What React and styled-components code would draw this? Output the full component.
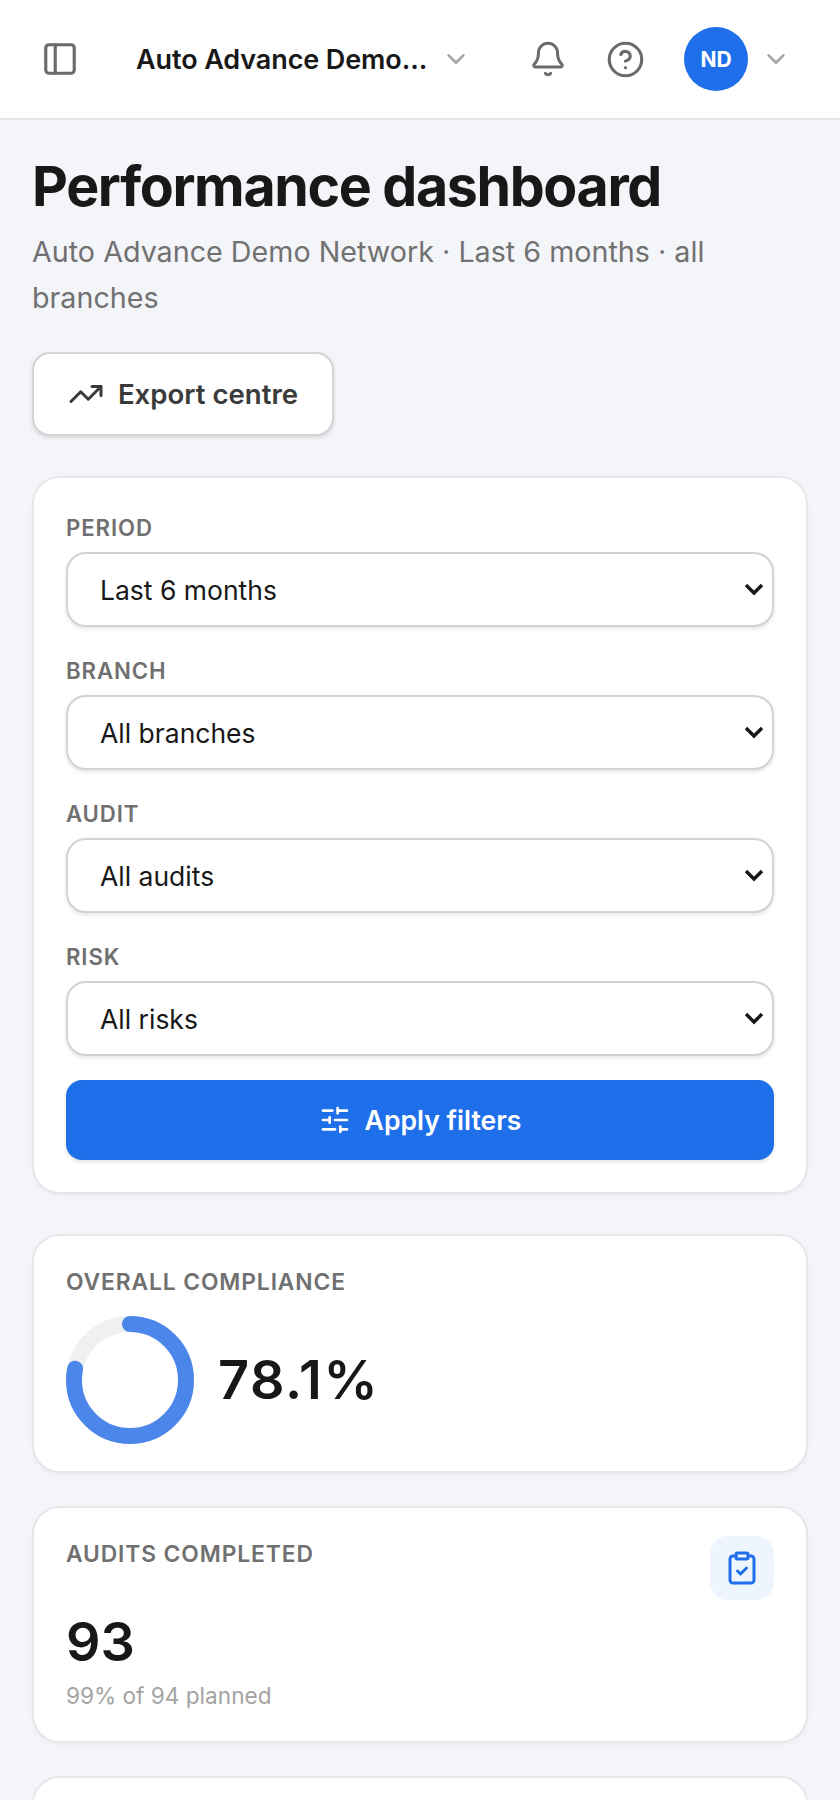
import React from "react";
import styled, { createGlobalStyle } from "styled-components";
import { PanelLeft, ChevronDown, Bell, CircleHelp, TrendingUp, SlidersHorizontal, ClipboardCheck } from "lucide-react";

const Global = createGlobalStyle`
  html, body { margin: 0; padding: 0; background: #f4f5f9; }
  body { font-family: Inter, "Liberation Sans", sans-serif; color: #181818; }
  html, body, #root { height: 1800px; overflow: hidden; }
  * { box-sizing: border-box; }
`;

const Header = styled.header`
  height: 120px;
  background: #fff;
  border-bottom: 2px solid #e4e5e8;
  display: flex;
  align-items: center;
  padding: 0 49px 0 41px;
  color: #6b6b6b;
`;
const Org = styled.div`
  display: flex;
  align-items: center;
  margin-left: 57px;
  color: #a8a8a8;
`;
const OrgName = styled.span`
  font-size: 27px;
  font-weight: 600;
  letter-spacing: -0.1px;
  color: #181818;
  width: 305px;
  white-space: nowrap;
`;
const HeaderIcons = styled.div`
  margin-left: auto;
  display: flex;
  align-items: center;
  gap: 39px;
`;
const User = styled.div`
  display: flex;
  align-items: center;
  gap: 13px;
  color: #a8a8a8;
`;
const Avatar = styled.div`
  width: 64px;
  height: 64px;
  border-radius: 50%;
  background: #206fea;
  color: #fff;
  font-size: 21px;
  font-weight: 700;
  display: flex;
  align-items: center;
  justify-content: center;
`;
const Main = styled.main`
  padding: 39px 32px 0;
`;
const Title = styled.h1`
  margin: 0;
  font-size: 55.5px;
  line-height: 54px;
  font-weight: 700;
  letter-spacing: -1.35px;
  color: #181818;
`;
const Sub = styled.p`
  margin: 16px 0 0;
  font-size: 28.7px;
  line-height: 46px;
  color: #717171;
`;
const ExportButton = styled.button`
  margin-top: 31px;
  height: 84px;
  width: 302px;
  display: flex;
  align-items: center;
  justify-content: center;
  gap: 14px;
  background: #fff;
  border: 2px solid #d4d4d6;
  border-radius: 18px;
  box-shadow: 0 2px 4px rgba(0, 0, 0, 0.12);
  font: 600 27.6px Inter, sans-serif;
  color: #3a3a3a;
`;
const Card = styled.section`
  background: #fff;
  border: 2px solid #e6e7ea;
  border-radius: 28px;
  box-shadow: 0 2px 4px rgba(0, 0, 0, 0.04);
  padding: 33px 32px;
  margin-top: ${(p) => p.$gap}px;
`;
const FilterCard = styled(Card)`
  height: 718px;
  padding-top: 36px;
`;
const FieldLabel = styled.label`
  display: block;
  padding-top: 1px;
  font-size: 22.2px;
  line-height: 26px;
  font-weight: 600;
  letter-spacing: 0.9px;
  text-transform: uppercase;
  color: #707070;
`;
const Field = styled.div`
  & + & {
    margin-top: 30px;
  }
`;
const SelectWrap = styled.div`
  position: relative;
  margin-top: 11px;
  color: #181818;
`;
const Select = styled.select`
  appearance: none;
  display: block;
  width: 100%;
  height: 75px;
  padding: 0 32px;
  background: #fff;
  border: 2px solid #d2d3d6;
  border-radius: 20px;
  box-shadow: 0 2px 4px rgba(0, 0, 0, 0.1);
  font: 400 26.5px Inter, sans-serif;
  color: #181818;
`;
const Arrow = styled.svg`
  position: absolute;
  right: 8px;
  top: 30px;
`;
const ApplyButton = styled.button`
  width: 100%;
  height: 80px;
  margin-top: 24px;
  display: flex;
  align-items: center;
  justify-content: center;
  gap: 14px;
  background: #206fea;
  border: 0;
  border-radius: 16px;
  box-shadow: 0 2px 4px rgba(0, 0, 0, 0.12);
  color: #fff;
  font: 600 26.6px Inter, sans-serif;
`;
const GaugeCard = styled(Card)`
  height: 239px;
  padding-top: 32px;
`;
const MetricLabel = styled.div`
  font-size: 22.8px;
  line-height: 28px;
  font-weight: 600;
  letter-spacing: 0.9px;
  text-transform: uppercase;
  color: #707070;
`;
const GaugeRow = styled.div`
  display: flex;
  align-items: center;
  gap: 24px;
  margin-top: 20px;
`;
const BigValue = styled.div`
  font-size: 54px;
  line-height: 64px;
  font-weight: 600;
  color: #181818;
`;
const GaugeValue = styled(BigValue)`
  letter-spacing: 1.6px;
`;
const StatCard = styled(Card)`
  height: 237px;
  padding-top: 28px;
`;
const StatTop = styled.div`
  display: flex;
  justify-content: space-between;
  align-items: flex-start;
`;
const StatLabel = styled(MetricLabel)`
  margin-top: 4px;
`;
const IconTile = styled.div`
  width: 64px;
  height: 64px;
  border-radius: 18px;
  background: #eef5ff;
  color: #206fea;
  display: flex;
  align-items: center;
  justify-content: center;
`;
const StatValue = styled(BigValue)`
  margin-top: 10px;
`;
const Note = styled.div`
  margin-top: 7px;
  font-size: 22.6px;
  line-height: 30px;
  color: #a3a3a3;
`;

const Gauge = ({ value }) => {
  const r = 56;
  const c = 2 * Math.PI * r;
  return (
    <svg width="128" height="128" viewBox="0 0 128 128">
      <circle cx="64" cy="64" r={r} fill="none" stroke="#eff0f2" strokeWidth="16" />
      <circle
        cx="64"
        cy="64"
        r={r}
        fill="none"
        stroke="#4c86ea"
        strokeWidth="16"
        strokeLinecap="round"
        strokeDasharray={`${(c * value) / 100} ${c}`}
        transform="rotate(-90 64 64)"
      />
    </svg>
  );
};

const FILTERS = [
  ["Period", "Last 6 months"],
  ["Branch", "All branches"],
  ["Audit", "All audits"],
  ["Risk", "All risks"],
];

export default function App() {
  return (
    <>
      <Global />
      <Header>
        <PanelLeft size={38} strokeWidth={2} />
        <Org>
          <OrgName>Auto Advance Demo...</OrgName>
          <ChevronDown size={30} strokeWidth={2} />
        </Org>
        <HeaderIcons>
          <Bell size={38} strokeWidth={1.9} />
          <CircleHelp size={39} strokeWidth={1.9} />
          <User>
            <Avatar>ND</Avatar>
            <ChevronDown size={30} strokeWidth={2} />
          </User>
        </HeaderIcons>
      </Header>
      <Main>
        <Title>Performance dashboard</Title>
        <Sub>Auto Advance Demo Network · Last 6 months · all branches</Sub>
        <ExportButton>
          <TrendingUp size={36} strokeWidth={2} />
          Export centre
        </ExportButton>
        <FilterCard $gap={40}>
          {FILTERS.map(([label, value]) => (
            <Field key={label}>
              <FieldLabel>{label}</FieldLabel>
              <SelectWrap>
                <Select defaultValue={value}>
                  <option>{value}</option>
                </Select>
                <Arrow width="24" height="16" viewBox="0 0 24 16" fill="none" stroke="currentColor" strokeWidth="3.4">
                  <path d="M4 3l8 8 8-8" />
                </Arrow>
              </SelectWrap>
            </Field>
          ))}
          <ApplyButton>
            <SlidersHorizontal size={32} strokeWidth={2} />
            Apply filters
          </ApplyButton>
        </FilterCard>
        <GaugeCard $gap={40}>
          <MetricLabel>Overall compliance</MetricLabel>
          <GaugeRow>
            <Gauge value={78.1} />
            <GaugeValue>78.1%</GaugeValue>
          </GaugeRow>
        </GaugeCard>
        <StatCard $gap={33}>
          <StatTop>
            <StatLabel>Audits completed</StatLabel>
            <IconTile>
              <ClipboardCheck size={36} strokeWidth={2} />
            </IconTile>
          </StatTop>
          <StatValue>93</StatValue>
          <Note>99% of 94 planned</Note>
        </StatCard>
        <StatCard $gap={33} />
      </Main>
    </>
  );
}
